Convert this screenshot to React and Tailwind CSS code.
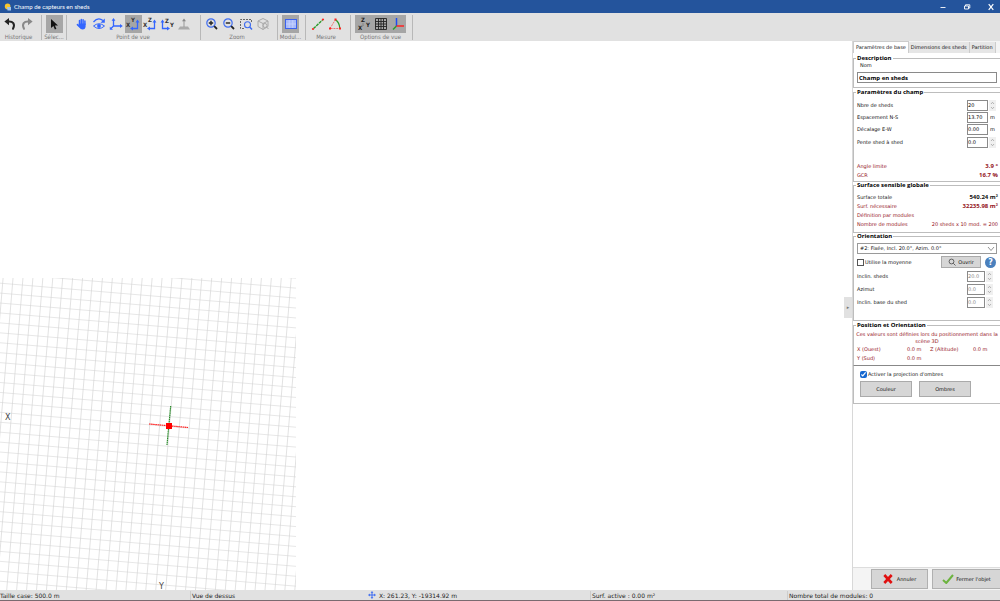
import React, { useState } from 'react';

const PointerIcon = () => (
    <svg viewBox="0 0 16 16" className="w-4 h-4">
        <path d="M5 3 V12 L7.4 10 L8.9 13.4 L10.4 12.7 L8.9 9.4 H12 Z" fill="#111" />
    </svg>
);

const UndoIcon = ({ color, flip }) => (
    <svg viewBox="0 0 16 16" className="w-4 h-4">
        <g transform={flip ? 'matrix(-1 0 0 1 16 0)' : undefined}>
            <path d="M6 5.5 C11 5 13.5 8 11 12.8" fill="none" stroke={color} strokeWidth="2" strokeLinecap="round" />
            <path d="M2.4 5.6 L7 2 V9.2 Z" fill={color} />
        </g>
    </svg>
);

const HandIcon = () => (
    <svg viewBox="0 0 16 16" className="w-4 h-4">
        <path d="M5.5 8.5 V4.6 M7.3 8 V3.5 M9.1 8 V3.7 M10.9 8.5 V5 M5.8 11 L3.4 8.6" stroke="#3366ff" strokeWidth="1.5" strokeLinecap="round" />
        <path d="M4.8 7.5 H11.6 V10.5 Q11.4 13.5 8.6 13.5 Q6.2 13.5 4.8 10.5 Z" fill="#3366ff" />
    </svg>
);

const OrbitIcon = () => (
    <svg viewBox="0 0 16 16" className="w-4 h-4" fill="none" stroke="#3366ff">
        <path d="M2.5 6 Q7 0.5 12 4.5" strokeWidth="1.3" />
        <path d="M13.8 2.5 V6.8 H9.5 Z" fill="#3366ff" stroke="none" />
        <path d="M2.5 10 Q8 5.5 13.5 10 Q8 15 2.5 10 Z" strokeWidth="1" />
        <circle cx="8" cy="10" r="1.9" fill="#3366ff" stroke="none" />
    </svg>
);

const AxesIcon = () => (
    <svg viewBox="0 0 16 16" className="w-4 h-4" fill="none" stroke="#3366ff" strokeWidth="1.3">
        <path d="M5.5 3.5 V10 H13 M5.5 10 L3 12.5" />
        <path d="M3.6 4.8 L5.5 2 L7.4 4.8 Z M12 8.1 L14.8 10 L12 11.9 Z M1.8 10.8 V13.8 H5 Z" fill="#3366ff" stroke="none" />
    </svg>
);

const PlaneIcon = ({ left, right, flip }) => (
    <svg viewBox="0 0 16 16" className="w-4 h-4">
        <g transform={flip ? 'matrix(-1 0 0 1 16 0)' : undefined}>
            <path d="M12.5 6 V12.5 H7" fill="none" stroke="#3366ff" strokeWidth="1.3" />
            <path d="M10.6 6.4 L12.5 3.4 L14.4 6.4 Z M8 10.6 L5 12.5 L8 14.4 Z" fill="#3366ff" />
        </g>
        <text x={flip ? 6 : 1} y={flip ? 7 : 11} className="text-[6px] font-bold" fill="#333">{left}</text>
        <text x={flip ? 11 : 6} y={flip ? 11 : 6} className="text-[6px] font-bold" fill="#333">{right}</text>
    </svg>
);

const GroundIcon = () => (
    <svg viewBox="0 0 16 16" className="w-4 h-4">
        <path d="M4 10.5 H12 L14 13.5 H2 Z" fill="#aaa" />
        <path d="M8 11 V4" stroke="#999" strokeWidth="1" />
        <path d="M6 5.2 L8 2.4 L10 5.2 Z" fill="#888" />
    </svg>
);

const ZoomIcon = ({ minus }) => (
    <svg viewBox="0 0 16 16" className="w-4 h-4" fill="none">
        <circle cx="7" cy="7" r="4.2" stroke="#3f6df0" strokeWidth="1.2" />
        <path d={minus ? 'M4.8 7 H9.2' : 'M4.8 7 H9.2 M7 4.8 V9.2'} stroke="#222" strokeWidth="1.4" />
        <path d="M10.2 10.2 L13 13" stroke="#222" strokeWidth="1.8" />
    </svg>
);

const ZoomWindowIcon = () => (
    <svg viewBox="0 0 16 16" className="w-4 h-4" fill="none">
        <path d="M6 12.5 H2.5 V3.5 H13.5 V6" stroke="#666" strokeWidth="1" strokeDasharray="2 1" />
        <circle cx="9.5" cy="8.7" r="3" stroke="#3f6df0" strokeWidth="1.1" />
        <path d="M11.7 11 L14 13.5" stroke="#3f6df0" strokeWidth="1.6" />
    </svg>
);

const CubeIcon = () => (
    <svg viewBox="0 0 16 16" className="w-4 h-4" fill="none" stroke="#aaa" strokeWidth="1">
        <path d="M8 2.5 L13 5 V10.5 L8 13.5 L3 10.5 V5 Z M3 5 L8 7.5 L13 5 M8 7.5 V13.5" />
        <circle cx="10" cy="9.5" r="2" />
        <path d="M11.5 11 L13.5 13" />
    </svg>
);

const ModuleIcon = () => (
    <svg viewBox="0 0 16 16" className="w-4 h-4">
        <rect x="2.5" y="3.5" width="11" height="9" fill="#a9bbfa" stroke="#3c62ee" />
        <path d="M6.2 4 V12 M9.8 4 V12 M3 8 H13" stroke="#cbd6ff" strokeWidth="0.8" />
    </svg>
);

const DistanceIcon = () => (
    <svg viewBox="0 0 16 16" className="w-4 h-4">
        <path d="M3.5 12.5 L12.5 4" stroke="#2a9a2a" strokeWidth="1.4" strokeDasharray="3 0.8" />
        <circle cx="3" cy="13" r="1.1" fill="#f22" />
        <circle cx="13" cy="3.5" r="1.1" fill="#f22" />
    </svg>
);

const AngleIcon = () => (
    <svg viewBox="0 0 16 16" className="w-4 h-4" fill="none">
        <path d="M8.5 3.5 L3 12.5 H13" stroke="#e66" strokeWidth="0.9" strokeDasharray="2 0.8" />
        <path d="M8.5 3.8 Q12.4 6.5 12.7 12" stroke="#2a9a2a" strokeWidth="1.3" />
        <path d="M7.5 2.5 h2 v2 h-2 Z M2 11.6 h2 v2 h-2 Z M12 11.6 h2 v2 h-2 Z" fill="#f22" />
    </svg>
);

const LabelsIcon = () => (
    <svg viewBox="0 0 16 16" className="w-4 h-4 text-[6px] font-bold" fill="#222">
        <text x="5" y="6">Z</text>
        <text x="2" y="14">X</text>
        <text x="10" y="11">Y</text>
        <path d="M7 7 V10 M5.5 11 L7 9.5" stroke="#777" strokeWidth="0.7" />
    </svg>
);

const GridIcon = () => (
    <svg viewBox="0 0 16 16" className="w-4 h-4">
        <path d="M2.5 2.5 H13.5 V13.5 H2.5 Z M5.5 2.5 V13.5 M8 2.5 V13.5 M10.5 2.5 V13.5 M2.5 5.5 H13.5 M2.5 8 H13.5 M2.5 10.5 H13.5" fill="none" stroke="#222" strokeWidth="0.9" />
    </svg>
);

const ColorAxesIcon = () => (
    <svg viewBox="0 0 16 16" className="w-4 h-4" fill="none" strokeWidth="1.5">
        <path d="M6.5 2 V10" stroke="#1d4cf0" />
        <path d="M6.5 10 L3 13.5" stroke="#2a9a2a" />
        <path d="M6.5 10 H14" stroke="#f22" />
    </svg>
);

const groups = [
    { label: 'Historique', className: 'w-[42px] pr-[4px]', tools: [
        { name: 'Annuler', icon: <UndoIcon color="#222" /> },
        { name: 'Rétablir', icon: <UndoIcon color="#888" flip /> },
    ] },
    { label: 'Sélec...', className: 'w-[25px]', tools: [
        { name: 'Sélection', icon: <PointerIcon />, active: true },
    ] },
    { label: 'Point de vue', className: 'w-[134px] pr-px', tools: [
        { name: 'Déplacer', icon: <HandIcon /> },
        { name: 'Tourner', icon: <OrbitIcon /> },
        { name: 'Perspective', icon: <AxesIcon /> },
        { name: 'Vue XY', icon: <PlaneIcon left="X" right="Y" />, active: true },
        { name: 'Vue XZ', icon: <PlaneIcon left="X" right="Z" /> },
        { name: 'Vue ZY', icon: <PlaneIcon left="Z" right="Y" flip /> },
        { name: 'Sol', icon: <GroundIcon /> },
    ] },
    { label: 'Zoom', className: 'w-[77px] pr-[4px]', tools: [
        { name: 'Zoom avant', icon: <ZoomIcon /> },
        { name: 'Zoom arrière', icon: <ZoomIcon minus /> },
        { name: 'Zoom fenêtre', icon: <ZoomWindowIcon /> },
        { name: 'Zoom objet', icon: <CubeIcon /> },
    ] },
    { label: 'Modul...', className: 'w-[28px] pr-[2px]', tools: [
        { name: 'Modules', icon: <ModuleIcon />, active: true },
    ] },
    { label: 'Mesure', className: 'w-[45px] pr-[4px]', tools: [
        { name: 'Distance', icon: <DistanceIcon /> },
        { name: 'Angle', icon: <AngleIcon /> },
    ] },
    { label: 'Options de vue', className: 'w-[62px] pr-[2px]', tools: [
        { name: 'Repères', icon: <LabelsIcon />, active: true },
        { name: 'Grille', icon: <GridIcon />, active: true },
        { name: 'Axes', icon: <ColorAxesIcon />, active: true },
    ] },
];

const Toolbar = () => (
    <div className="flex bg-[#e1e1e1] pt-[2px] pb-px font-['DejaVu_Sans_Condensed','DejaVu_Sans',sans-serif]">
        {groups.map(group => (
            <div key={group.label} className={`flex flex-col items-center border-r border-[#b8b8b8] ${group.className}`}>
                <div className="flex">
                    {group.tools.map(tool => (
                        <button key={tool.name} aria-label={tool.name} className={`flex h-[18px] w-[17px] items-center justify-center ${tool.active ? 'bg-[#a6a6a6]' : ''}`}>
                            {tool.icon}
                        </button>
                    ))}
                </div>
                <span className="text-[6px] leading-[7px] text-[#777] whitespace-nowrap">{group.label}</span>
            </div>
        ))}
    </div>
);

const TitleBar = () => (
    <header className="flex h-[13px] items-center bg-[#24549c] pl-1 text-white">
        <svg viewBox="0 0 8 8" className="w-2 h-2">
            <circle cx="3.6" cy="3.4" r="2.8" fill="#f7c52c" />
            <path d="M3 4 H7 V7.5 H3.5 Z" fill="#9fc4ea" />
        </svg>
        <h1 className="ml-[2px] font-['Lato',sans-serif] text-[6px] leading-[8px]">Champ de capteurs en sheds</h1>
        <div className="ml-auto flex gap-4 pr-[5px]">
            <button aria-label="Réduire">
                <svg viewBox="0 0 8 8" className="w-2 h-2"><path d="M1.5 4.5 H6.5" stroke="#fff" strokeWidth="0.9" /></svg>
            </button>
            <button aria-label="Restaurer">
                <svg viewBox="0 0 8 8" className="w-2 h-2"><path d="M1.5 3 H5.5 V6 H1.5 Z M2.5 3 V1.8 H6.8 V5 H5.5" fill="none" stroke="#fff" strokeWidth="0.9" /></svg>
            </button>
            <button aria-label="Fermer">
                <svg viewBox="0 0 8 8" className="w-2 h-2"><path d="M1.7 1.2 L6.3 6.8 M6.3 1.2 L1.7 6.8" stroke="#fff" strokeWidth="1.2" /></svg>
            </button>
        </div>
    </header>
);

const Scene = () => (
    <main className="flex min-w-0 flex-1 items-end bg-white">
        <svg viewBox="0 0 296 312" className="w-[296px] h-[312px]">
            <defs>
                <pattern id="grid" width="9.9" height="9.9" patternUnits="userSpaceOnUse" patternTransform="translate(169 148) rotate(4.8)">
                    <path d="M0 0 H9.9 M0 0 V9.9" stroke="#d0d0d0" strokeWidth="1.2" fill="none" />
                </pattern>
            </defs>
            <rect width="296" height="312" fill="url(#grid)" />
            <path d="M149 146 L188 149.5" stroke="#f22" strokeWidth="1.2" strokeDasharray="1.6 0.5" />
            <path d="M170.7 128 L167 167" stroke="#2a8a2a" strokeWidth="1.2" strokeDasharray="1.6 0.5" />
            <rect x="166" y="145" width="6" height="6" fill="#f00" />
            <text x="5" y="142" className="text-[8px]" fill="#444">X</text>
            <text x="159" y="311" className="text-[8px]" fill="#444">Y</text>
        </svg>
    </main>
);

const Group = ({ title, className = '', children }) => (
    <fieldset className={`min-w-0 border border-r-0 border-[#bdbdbd] pl-[2px] pr-[2px] ${className}`}>
        <legend className="px-px font-['Open_Sans',sans-serif] text-[6px] font-bold leading-[6px] text-black">{title}</legend>
        {children}
    </fieldset>
);

const Spinner = () => (
    <span className="flex h-[11px] w-[7px] flex-col justify-between bg-[#f0f0f0] py-px">
        <svg viewBox="0 0 7 4" className="w-[7px] h-1"><path d="M2 3 L3.5 1.3 L5 3" fill="none" stroke="#999" strokeWidth="0.7" /></svg>
        <svg viewBox="0 0 7 4" className="w-[7px] h-1"><path d="M2 1 L3.5 2.7 L5 1" fill="none" stroke="#999" strokeWidth="0.7" /></svg>
    </span>
);

const NumberRow = ({ id, label, value, unit, disabled }) => (
    <div className={`flex h-[12px] items-center pl-px ${disabled ? 'pr-1' : 'pr-px'}`}>
        <label htmlFor={id}>{label}</label>
        <input
            id={id}
            defaultValue={value}
            disabled={disabled}
            className={`ml-auto h-[11px] border border-[#8a8a8a] bg-white ${disabled ? 'w-[18px] text-[#888]' : 'w-[21px] text-black'}`}
        />
        <span className="ml-px w-[8px]">{unit ? <span className="pl-px">{unit}</span> : <Spinner />}</span>
    </div>
);

const ValueRow = ({ label, value, bold, dark }) => (
    <div className={`flex h-[9px] items-center justify-between whitespace-nowrap pl-px ${dark ? '' : 'text-[#94141c]'}`}>
        <span>{label}</span>
        <span className={bold ? "font-['Open_Sans',sans-serif] text-[6px] font-bold" : ''}>{value}</span>
    </div>
);

const tabs = ['Paramètres de base', 'Dimensions des sheds', 'Partition'];

const SidePanel = () => {
    const [tab, setTab] = useState(tabs[0]);
    const [average, setAverage] = useState(false);
    const [shadows, setShadows] = useState(true);

    return (
        <aside className="flex w-[148px] shrink-0 flex-col border-l border-[#d8d8d8] bg-white text-[5px] leading-[7px] text-[#111]">
            <div role="tablist" className="flex h-[12px] items-end bg-[#f4f4f4]">
                {tabs.map(name => (
                    <button
                        key={name}
                        role="tab"
                        aria-selected={tab === name}
                        onClick={() => setTab(name)}
                        className={`whitespace-nowrap border-r border-[#ccc] px-[2px] ${tab === name ? 'h-[12px] border-l border-t bg-white' : 'h-[11px] bg-[#e6e6e6]'}`}
                    >
                        {name}
                    </button>
                ))}
            </div>

            <div className="flex flex-col pt-[2px]">
                <Group title="Description" className="pb-[4px]">
                    <label htmlFor="nom" className="block pb-[3px] pl-[4px] pt-px">Nom</label>
                    <div className="pl-px pr-px">
                        <input id="nom" defaultValue="Champ en sheds" className="block h-[11px] w-full border border-[#8a8a8a] bg-white px-px font-['Open_Sans',sans-serif] text-[6px] font-bold text-black" />
                    </div>
                </Group>

                <Group title="Paramètres du champ" className="mt-px pb-px">
                    <div className="pt-[4px]">
                        <NumberRow id="sheds" label="Nbre de sheds" value="20" />
                        <NumberRow id="espacement" label="Espacement N-S" value="13.70" unit="m" />
                        <NumberRow id="decalage" label="Décalage E-W" value="0.00" unit="m" />
                    </div>
                    <div className="pt-px">
                        <NumberRow id="pente" label="Pente shed à shed" value="0.0" />
                    </div>
                    <div className="pt-[14px]">
                        <ValueRow label="Angle limite" value="3.9 °" bold />
                        <ValueRow label="GCR" value="16.7 %" bold />
                    </div>
                </Group>

                <Group title="Surface sensible globale" className="pb-[3px]">
                    <div className="pt-[5px]">
                        <ValueRow label="Surface totale" value="540.24 m²" bold dark />
                        <ValueRow label="Surf. nécessaire" value="32235.98 m²" bold />
                        <ValueRow label="Définition par modules" />
                        <ValueRow label="Nombre de modules" value="20 sheds x 10 mod. = 200" />
                    </div>
                </Group>

                <Group title="Orientation" className="pb-[12px]">
                    <div className="relative ml-px mr-px mt-[4px]">
                        <select aria-label="Orientation" className="block h-[11px] w-full appearance-none border border-[#9a9a9a] bg-white px-[2px]">
                            <option>#2: Fixée, Incl. 20.0°, Azim. 0.0°</option>
                        </select>
                        <svg viewBox="0 0 8 6" className="pointer-events-none absolute right-[2px] top-[3px] h-[6px] w-2">
                            <path d="M1 1 L4 4.5 L7 1" fill="none" stroke="#666" strokeWidth="0.7" />
                        </svg>
                    </div>
                    <div className="flex items-center pb-[2px] pr-[2px] pt-[2px]">
                        <label className="flex items-center gap-px pl-px">
                            <input type="checkbox" checked={average} onChange={e => setAverage(e.target.checked)} className="h-[7px] w-[7px] appearance-none border border-[#555] bg-white checked:bg-[#1668d0]" />
                            Utilise la moyenne
                        </label>
                        <button className="ml-auto flex h-[12px] w-10 items-center justify-center gap-[2px] border border-[#aaa] bg-[#d6d6d6]">
                            <svg viewBox="0 0 8 8" className="w-2 h-2" fill="none" stroke="#444" strokeWidth="0.8">
                                <circle cx="3.5" cy="3.5" r="2.4" />
                                <path d="M5.3 5.3 L7.5 7.5" />
                            </svg>
                            Ouvrir
                        </button>
                        <button aria-label="Aide" className="ml-1 flex h-[11px] w-[11px] items-center justify-center rounded-full bg-[#4a80bd] text-[8px] font-bold text-white">?</button>
                    </div>
                    <div className="flex flex-col gap-px">
                        <NumberRow id="incl" label="Inclin. sheds" value="20.0" disabled />
                        <NumberRow id="azimut" label="Azimut" value="0.0" disabled />
                        <NumberRow id="base" label="Inclin. base du shed" value="0.0" disabled />
                    </div>
                </Group>

                <Group title="Position et Orientation" className="mt-px border-b-[#888] pb-[2px] text-[#94141c]">
                    <p className="whitespace-nowrap pt-[3px] text-center">
                        Ces valeurs sont définies lors du positionnement dans la
                        <br />
                        scène 3D
                    </p>
                    <div className="grid grid-cols-[50px_23px_43px_1fr] pl-px leading-[9px]">
                        <span>X (Ouest)</span>
                        <span>0.0 m</span>
                        <span>Z (Altitude)</span>
                        <span>0.0 m</span>
                        <span>Y (Sud)</span>
                        <span>0.0 m</span>
                    </div>
                </Group>

                <div className="border-b border-l border-[#bdbdbd] pb-[6px] pl-[6px] pt-[5px]">
                    <label className="flex items-center gap-px">
                        <input type="checkbox" checked={shadows} onChange={e => setShadows(e.target.checked)} className="h-[7px] w-[7px] accent-[#1668d0]" />
                        Activer la projection d'ombres
                    </label>
                    <div className="flex gap-[7px] pt-[3px]">
                        <button className="h-[16px] w-[52px] border border-[#aaa] bg-[#d6d6d6]">Couleur</button>
                        <button className="h-[16px] w-[52px] border border-[#aaa] bg-[#d6d6d6]">Ombres</button>
                    </div>
                </div>
            </div>

            <div className="mt-auto flex justify-end gap-[4px] border-t border-[#ddd] bg-[#f4f4f4] py-px">
                <button className="flex h-[20px] w-[57px] items-center justify-center gap-1 border border-[#b0b0b0] bg-[#d6d6d6]">
                    <svg viewBox="0 0 10 10" className="w-[10px] h-[10px]"><path d="M1.3 1 L8.7 9 M8.7 1 L1.3 9" stroke="#e01010" strokeWidth="2.6" /></svg>
                    Annuler
                </button>
                <button className="flex h-[20px] w-[68px] items-center justify-center gap-[2px] border border-r-0 border-[#b0b0b0] bg-[#d6d6d6]">
                    <svg viewBox="0 0 12 10" className="w-[12px] h-[10px]"><path d="M1 6 L4.3 9 L11 1" fill="none" stroke="#6cb33f" strokeWidth="2" /></svg>
                    Fermer l'objet
                </button>
            </div>
        </aside>
    );
};

const StatusBar = () => (
    <footer className="grid h-[11px] grid-cols-[190fr_400fr_197fr_213fr] items-center border-b border-[#7a6a70] bg-[#e1e1e1] text-[6px] leading-[9px] text-[#222]">
        <span>Taille case: 500.0 m</span>
        <div className="flex items-center border-l border-[#ccc] pl-px">
            <span className="w-[176px]">Vue de dessus</span>
            <svg viewBox="0 0 8 8" className="w-2 h-2">
                <path d="M4 1 V7 M1 4 H7" stroke="#3f6df0" strokeWidth="1" />
                <path d="M4 0 L5.4 1.8 H2.6 Z M4 8 L5.4 6.2 H2.6 Z M0 4 L1.8 2.6 V5.4 Z M8 4 L6.2 2.6 V5.4 Z" fill="#3f6df0" />
            </svg>
            <span className="pl-[3px]">X: 261.23, Y: -19314.92 m</span>
        </div>
        <span className="border-l border-[#ccc] pl-px">Surf. active : 0.00 m²</span>
        <span className="border-l border-[#ccc] pl-px">Nombre total de modules: 0</span>
    </footer>
);

const App = () => (
    <div className="flex h-screen flex-col overflow-hidden bg-white font-['DejaVu_Sans',sans-serif]">
        <TitleBar />
        <Toolbar />
        <div className="flex min-h-0 flex-1">
            <Scene />
            <button aria-label="Replier le panneau" className="mt-64 flex h-[21px] w-2 items-center justify-center bg-[#e1e1e1] text-[5px] text-[#777]">▸</button>
            <SidePanel />
        </div>
        <StatusBar />
    </div>
);

export default App;
